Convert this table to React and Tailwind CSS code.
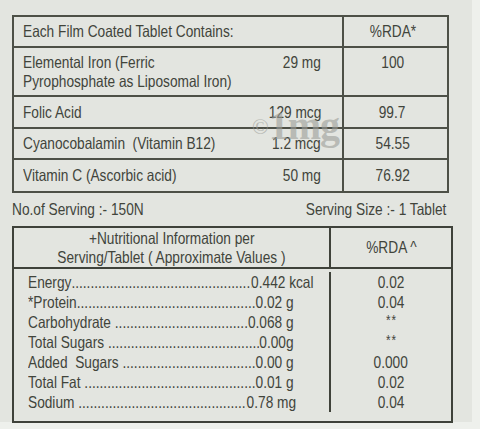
import React from "react";

const font = { fontFamily: '"Liberation Sans", Arial, sans-serif' };

const T = ({ children, o = "origin-left", className = "" }) => (
  <span className={`inline-block whitespace-pre scale-x-[0.83] ${o} ${className}`}>{children}</span>
);

const topRows = [
  { name: ["Elemental Iron (Ferric", "Pyrophosphate as Liposomal Iron)"], amt: "29 mg", rda: "100", h: "h-[49px]" },
  { name: ["Folic Acid"], amt: "129 mcg", rda: "99.7", h: "h-[32px]" },
  { name: ["Cyanocobalamin  (Vitamin B12)"], amt: "1.2 mcg", rda: "54.55", h: "h-[31px]" },
  { name: ["Vitamin C (Ascorbic acid)"], amt: "50 mg", rda: "76.92", h: "h-[31px]" },
];

const nutri = [
  { l: "Energy", v: "0.442 kcal", r: "0.02", w: "w-[344px]" },
  { l: "*Protein", v: "0.02 g", r: "0.04", w: "w-[320px]" },
  { l: "Carbohydrate ", v: "0.068 g", r: "**", w: "w-[320px]" },
  { l: "Total Sugars ", v: "0.00g", r: "**", w: "w-[320px]" },
  { l: "Added  Sugars ", v: "0.00 g", r: "0.000", w: "w-[320px]" },
  { l: "Total Fat ", v: "0.01 g", r: "0.02", w: "w-[320px]" },
  { l: "Sodium ", v: "0.78 mg", r: "0.04", w: "w-[323px]" },
];

const DOTS = ".".repeat(120);

export default function App() {
  return (
    <div className="relative w-[480px] h-[429px] bg-[#eef0ec] overflow-hidden" style={font}>
      <div className="w-[472px] h-[422px] bg-[#e3e5e0] text-[#41443b] pt-[15px] pl-[12px]">
        {/* Top table */}
        <div className="w-[437px] border-2 border-[#4d5047] text-[16.5px] leading-[19px]">
          <div className="flex h-[31px] border-b-2 border-[#4d5047]">
            <div className="w-[330px] border-r-2 border-[#4d5047] pl-[9px] flex items-center">
              <T>Each Film Coated Tablet Contains:</T>
            </div>
            <div className="flex-1 flex items-center justify-center pr-[6px]">
              <T o="origin-center">%RDA*</T>
            </div>
          </div>
          {topRows.map((r, i) => (
            <div key={i} className={`flex ${r.h} ${i < topRows.length - 1 ? "border-b-2 border-[#4d5047]" : ""}`}>
              <div className={`w-[330px] border-r-2 border-[#4d5047] pl-[9px] pr-[21px] flex ${r.name.length > 1 ? "items-start pt-[5px]" : "items-center"}`}>
                <div className="flex-1 min-w-0">
                  {r.name.map((n, j) => (
                    <div key={j}>
                      <T>{n}</T>
                    </div>
                  ))}
                </div>
                <div className="whitespace-nowrap">
                  <T o="origin-right">{r.amt}</T>
                </div>
              </div>
              <div className={`flex-1 flex justify-center pr-[6px] ${r.name.length > 1 ? "items-start pt-[5px]" : "items-center"}`}>
                <T o="origin-center">{r.rda}</T>
              </div>
            </div>
          ))}
        </div>
        {/* Serving line */}
        <div className="w-[434px] flex justify-between text-[16.5px] leading-[19px] mt-[7px]">
          <T>No.of Serving :- 150N</T>
          <T o="origin-right">Serving Size :- 1 Tablet</T>
        </div>
        {/* Bottom table */}
        <div className="w-[441px] mt-[7px] border-2 border-[#3f423a] text-[16.5px] leading-[19px]">
          <div className="flex h-[41px] border-b-2 border-[#3f423a]">
            <div className="w-[317px] border-r-2 border-[#3f423a] flex flex-col items-center justify-center text-center">
              <T o="origin-center">+Nutritional Information per</T>
              <T o="origin-center">Serving/Tablet ( Approximate Values )</T>
            </div>
            <div className="flex-1 flex items-center justify-center">
              <T o="origin-center">%RDA ^</T>
            </div>
          </div>
          <div className="flex pb-[9px] pt-[3px]">
            <div className="w-[317px] border-r-2 border-[#3f423a] pl-[14px]">
              {nutri.map((n, i) => (
                <div key={i} className={`flex h-[20px] items-center ${n.w} scale-x-[0.83] origin-left`}>
                  <span className="whitespace-pre">{n.l}</span>
                  <span className="flex-1 overflow-hidden whitespace-nowrap">{DOTS}</span>
                  <span className="whitespace-pre">{n.v}</span>
                </div>
              ))}
            </div>
            <div className="flex-1">
              {nutri.map((n, i) => (
                <div key={i} className="h-[20px] flex items-center justify-center">
                  {n.r === "**" ? (
                    <span className="text-[14px] leading-[12px] tracking-[1px] -mt-[4px]">
                      <T o="origin-center">**</T>
                    </span>
                  ) : (
                    <T o="origin-center">{n.r}</T>
                  )}
                </div>
              ))}
            </div>
          </div>
        </div>
      </div>
      {/* watermark */}
      <div
        className="absolute left-[252px] top-[106px] flex items-center text-[#9c9e99] opacity-60 pointer-events-none"
        style={{ fontFamily: '"Liberation Serif", serif' }}
      >
        <span className="text-[22px] leading-[22px] mt-[2px]">©</span>
        <span className="text-[40px] leading-[40px] font-bold tracking-[-1px]">1mg</span>
      </div>
    </div>
  );
}
